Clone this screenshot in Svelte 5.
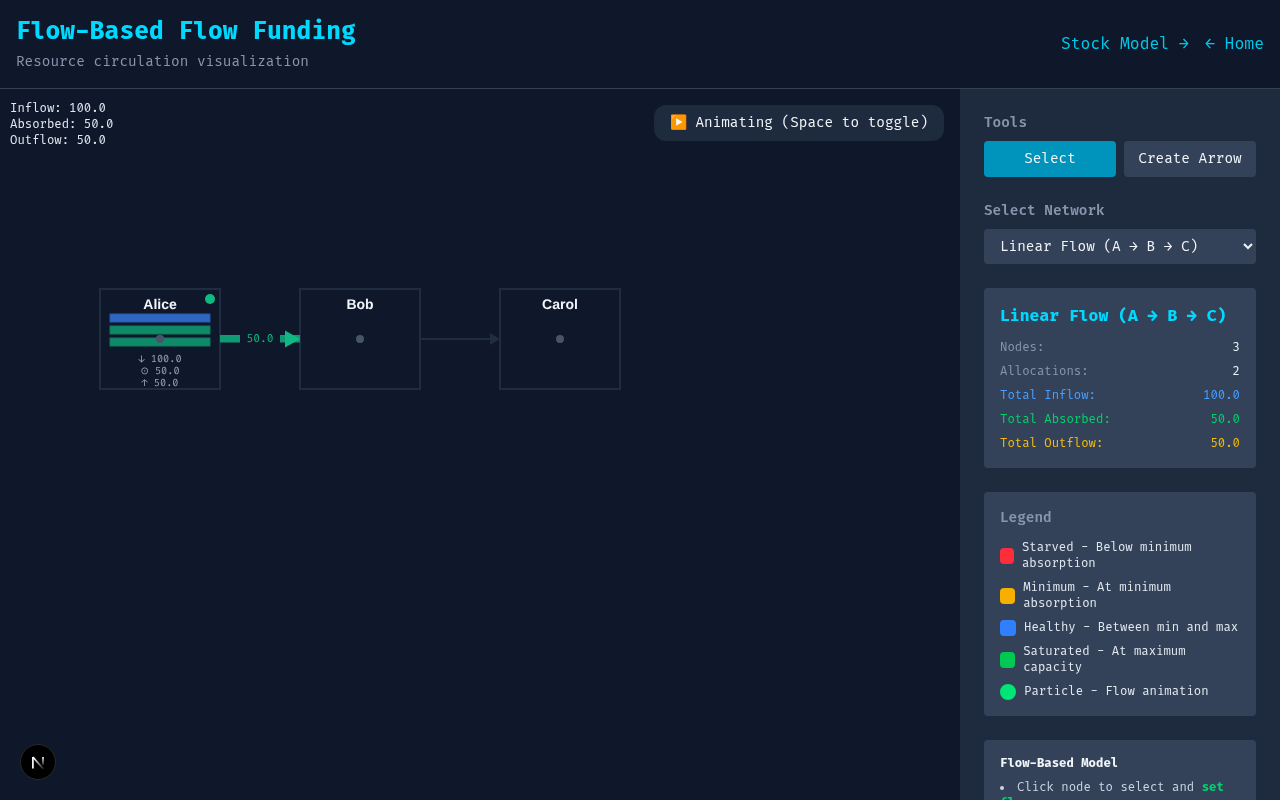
<script>
  const rows = [
    { label: 'Nodes:', value: '3', tone: 'plain' },
    { label: 'Allocations:', value: '2', tone: 'plain' },
    { label: 'Total Inflow:', value: '100.0', tone: 'blue' },
    { label: 'Total Absorbed:', value: '50.0', tone: 'green' },
    { label: 'Total Outflow:', value: '50.0', tone: 'yellow' }
  ];
  const legend = [
    { text: 'Starved - Below minimum absorption', color: '#ff2d3a', round: false },
    { text: 'Minimum - At minimum absorption', color: '#f5b000', round: false },
    { text: 'Healthy - Between min and max', color: '#2f7fff', round: false },
    { text: 'Saturated - At maximum capacity', color: '#00c853', round: false },
    { text: 'Particle - Flow animation', color: '#00e676', round: true }
  ];
  const nodes = [
    { name: 'Alice', x: 100 },
    { name: 'Bob', x: 300 },
    { name: 'Carol', x: 500 }
  ];
</script>

<div class="page">
  <header class="top">
    <div>
      <h1>Flow-Based Flow Funding</h1>
      <p>Resource circulation visualization</p>
    </div>
    <nav>
      <span>Stock Model →</span>
      <span>← Home</span>
    </nav>
  </header>

  <div class="body">
    <main class="canvas">
      <svg class="diagram" width="960" height="711" viewBox="0 0 960 711">
        {#each nodes as n}
          <rect x={n.x} y="200" width="120" height="100" class="node" />
          <text x={n.x + 60} y="220" class="name">{n.name}</text>
          <circle cx={n.x + 60} cy="250" r="4" class="hub" />
        {/each}

        <rect x="110" y="225" width="100" height="8" class="bar blue" />
        <rect x="110" y="237" width="100" height="8" class="bar teal" />
        <rect x="110" y="249" width="100" height="8" class="bar teal" />
        <circle cx="160" cy="250" r="4" class="hub" />
        <circle cx="210" cy="210" r="5" class="status" />
        <text x="160" y="273" class="stat">↓ 100.0</text>
        <text x="160" y="285" class="stat">⊙ 50.0</text>
        <text x="160" y="297" class="stat">↑ 50.0</text>

        <rect x="220" y="246" width="20" height="7.5" class="flow" />
        <rect x="280" y="246" width="20" height="7.5" class="flow" />
        <polygon points="285,241.5 300,250 285,258.5" class="head" />
        <text x="260" y="253" class="flowlabel">50.0</text>

        <line x1="420" y1="250" x2="490" y2="250" class="idle" />
        <polygon points="490,244 500,250 490,256" class="idlehead" />
      </svg>

      <div class="stats">
        <div>Inflow: 100.0</div>
        <div>Absorbed: 50.0</div>
        <div>Outflow: 50.0</div>
      </div>
      <div class="pill">▶️ Animating (Space to toggle)</div>
      <svg class="badge" width="36" height="36" viewBox="0 0 36 36">
        <defs>
          <linearGradient id="fadeDiag" gradientUnits="userSpaceOnUse" x1="14" y1="14" x2="23.5" y2="25">
            <stop offset="0" stop-color="#fff" />
            <stop offset="1" stop-color="#fff" stop-opacity="0.1" />
          </linearGradient>
          <linearGradient id="fadeStem" gradientUnits="userSpaceOnUse" x1="23" y1="13" x2="23" y2="21">
            <stop offset="0" stop-color="#fff" />
            <stop offset="1" stop-color="#fff" stop-opacity="0.15" />
          </linearGradient>
        </defs>
        <circle cx="18" cy="18" r="17.5" fill="#000" stroke="#2a2a2a" />
        <path d="M12.9 24.4V13" fill="none" stroke="#fff" stroke-width="1.7" />
        <path d="M12.9 13L23.4 25" fill="none" stroke="url(#fadeDiag)" stroke-width="1.7" />
        <path d="M23 13V21" fill="none" stroke="url(#fadeStem)" stroke-width="1.7" />
      </svg>
    </main>

    <aside class="side">
      <section>
        <div class="label">Tools</div>
        <div class="tools">
          <button class="active">Select</button>
          <button>Create Arrow</button>
        </div>
      </section>

      <section>
        <div class="label">Select Network</div>
        <select>
          <option>Linear Flow (A → B → C)</option>
        </select>
      </section>

      <section class="card">
        <h2>Linear Flow (A → B → C)</h2>
        <div class="rows">
          {#each rows as r}
            <div class="row {r.tone}">
              <span>{r.label}</span>
              <span class="val">{r.value}</span>
            </div>
          {/each}
        </div>
      </section>

      <section class="card">
        <div class="label legend-title">Legend</div>
        <div class="legend">
          {#each legend as l}
            <div class="legend-row">
              <span class="swatch" class:round={l.round} style:background={l.color}></span>
              <span>{l.text}</span>
            </div>
          {/each}
        </div>
      </section>

      <section class="card">
        <h3>Flow-Based Model</h3>
        <ul>
          <li>Click node to select and <strong>set flow</strong></li>
        </ul>
      </section>
    </aside>
  </div>
</div>

<style>
  :global(body) {
    margin: 0;
    background: #0f172a;
  }
  .page {
    width: 1280px;
    height: 800px;
    overflow: hidden;
    display: flex;
    flex-direction: column;
    background: #0f172a;
    color: #f1f5f9;
    font-family: "Fira Code", "Fira Mono", monospace;
    will-change: transform;
  }
  .top {
    display: flex;
    justify-content: space-between;
    align-items: center;
    padding: 16px;
    border-bottom: 1px solid #334155;
    flex: none;
  }
  h1 {
    margin: 0 0 4px;
    font-size: 24px;
    line-height: 32px;
    font-weight: 700;
    color: #00d9ff;
  }
  .top p {
    margin: 0;
    font-size: 14px;
    line-height: 20px;
    color: #8895ad;
  }
  nav {
    display: flex;
    gap: 16px;
    font-size: 16px;
    line-height: 24px;
    color: #00c8ea;
  }
  .body {
    flex: 1;
    min-height: 0;
    display: flex;
  }
  .canvas {
    position: relative;
    width: 960px;
    flex: none;
    overflow: hidden;
  }
  .diagram {
    display: block;
    text-rendering: geometricPrecision;
  }
  .node {
    fill: none;
    stroke: #202c40;
    stroke-width: 2;
  }
  .name {
    font-family: "Liberation Sans", Arial, sans-serif;
    font-size: 14px;
    font-weight: 700;
    fill: #f1f5f9;
    text-anchor: middle;
  }
  .hub {
    fill: #475569;
  }
  .bar {
    stroke-width: 1;
  }
  .blue {
    fill: #2f66c4;
    stroke: #2a5aa8;
  }
  .teal {
    fill: #0f8a68;
    stroke: #0e7a5e;
  }
  .status {
    fill: #10b981;
  }
  .stat {
    font-family: "Fira Code", "Noto Sans", sans-serif;
    font-size: 10px;
    fill: #94a3b8;
    text-anchor: middle;
  }
  .flow {
    fill: #0f9a73;
  }
  .head {
    fill: #10b981;
  }
  .flowlabel {
    font-size: 11px;
    fill: #10b981;
    text-anchor: middle;
  }
  .idle {
    stroke: #202c40;
    stroke-width: 2;
  }
  .idlehead {
    fill: #212d40;
  }
  .stats {
    position: absolute;
    left: 10px;
    top: 12px;
    font-size: 12px;
    line-height: 16px;
    color: #e2e8f0;
  }
  .pill {
    position: absolute;
    top: 16px;
    right: 16px;
    padding: 8px 16px;
    background: #1e2a3e;
    border-radius: 12px;
    font-size: 14px;
    line-height: 20px;
  }
  .badge {
    position: absolute;
    left: 20px;
    bottom: 20px;
  }
  .side {
    width: 320px;
    flex: none;
    box-sizing: border-box;
    padding: 24px;
    background: #1e2a3e;
    display: flex;
    flex-direction: column;
    gap: 24px;
  }
  .side section {
    flex: none;
  }
  .label {
    font-size: 14px;
    line-height: 20px;
    font-weight: 600;
    color: #8895ad;
    margin-bottom: 8px;
  }
  .tools {
    display: grid;
    grid-template-columns: 1fr 1fr;
    gap: 8px;
  }
  button {
    height: 36px;
    padding: 8px;
    border: 0;
    border-radius: 4px;
    background: #334259;
    color: #f1f5f9;
    font: inherit;
    font-size: 14px;
    line-height: 20px;
  }
  button.active {
    background: #0093bb;
  }
  select {
    display: block;
    width: 100%;
    height: 35px;
    padding: 8px 12px;
    border: 0;
    border-radius: 4px;
    background: #334259;
    color: #f1f5f9;
    font: inherit;
    font-size: 14px;
  }
  .card {
    background: #334259;
    border-radius: 4px;
    padding: 16px;
  }
  h2 {
    margin: 0 0 12px;
    font-size: 16px;
    line-height: 24px;
    font-weight: 700;
    color: #00d9ff;
  }
  .rows {
    display: flex;
    flex-direction: column;
    gap: 8px;
    font-size: 12px;
    line-height: 16px;
  }
  .row {
    display: flex;
    justify-content: space-between;
  }
  .row.plain {
    color: #8895ad;
  }
  .row.plain .val {
    color: #f1f5f9;
  }
  .row.blue {
    color: #4a9eff;
  }
  .row.green {
    color: #00d26a;
  }
  .row.yellow {
    color: #f5bd0a;
  }
  .legend-title {
    margin-bottom: 12px;
  }
  .legend {
    display: flex;
    flex-direction: column;
    gap: 8px;
    font-size: 12px;
    line-height: 16px;
    color: #e2e8f0;
  }
  .legend-row {
    display: flex;
    align-items: center;
    gap: 8px;
  }
  .swatch {
    width: 16px;
    height: 16px;
    border-radius: 4px;
  }
  .swatch.round {
    border-radius: 50%;
  }
  h3 {
    margin: 0 0 8px;
    font-size: 12px;
    line-height: 16px;
    font-weight: 700;
  }
  ul {
    margin: 0;
    padding: 0;
    list-style-position: inside;
    font-size: 12px;
    line-height: 16px;
    color: #cbd5e1;
  }
  strong {
    color: #00d26a;
  }
</style>
